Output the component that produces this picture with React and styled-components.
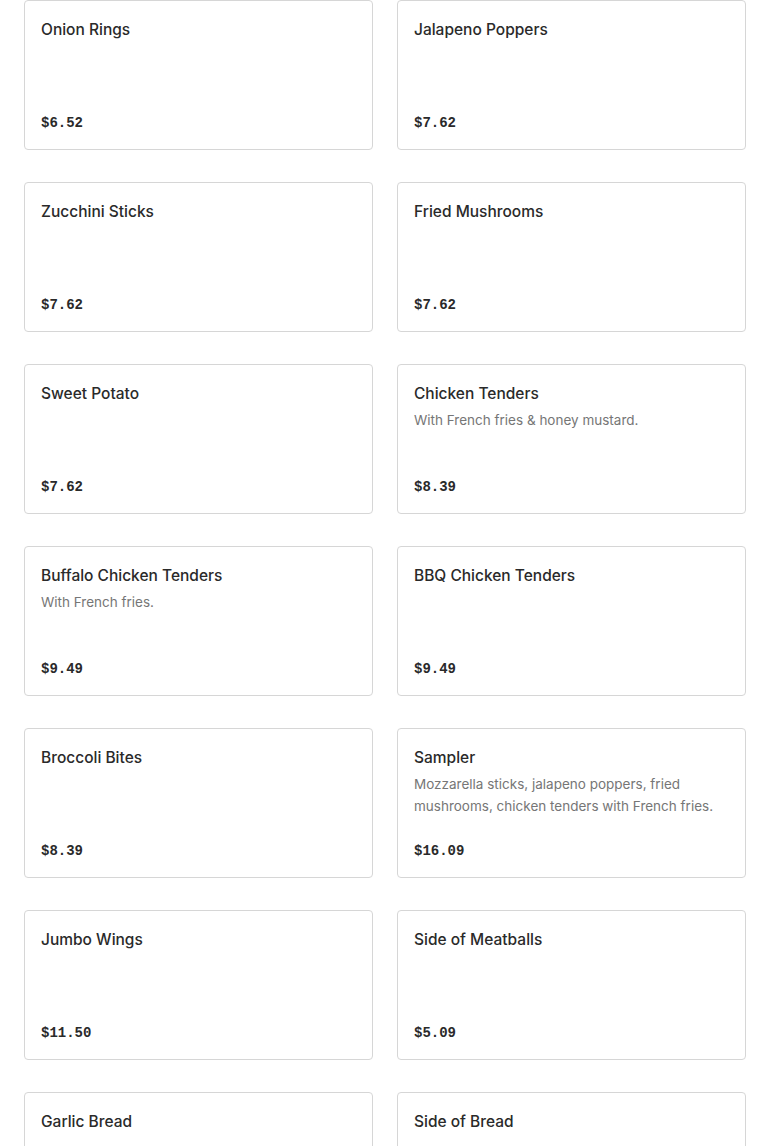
import React from "react";
import styled, { createGlobalStyle } from "styled-components";

const items = [
  { name: "Onion Rings", price: "$6.52" },
  { name: "Jalapeno Poppers", price: "$7.62" },
  { name: "Zucchini Sticks", price: "$7.62" },
  { name: "Fried Mushrooms", price: "$7.62" },
  { name: "Sweet Potato", price: "$7.62" },
  { name: "Chicken Tenders", desc: "With French fries & honey mustard.", price: "$8.39" },
  { name: "Buffalo Chicken Tenders", desc: "With French fries.", price: "$9.49" },
  { name: "BBQ Chicken Tenders", price: "$9.49" },
  { name: "Broccoli Bites", price: "$8.39" },
  {
    name: "Sampler",
    desc: "Mozzarella sticks, jalapeno poppers, fried mushrooms, chicken tenders with French fries.",
    price: "$16.09",
  },
  { name: "Jumbo Wings", price: "$11.50" },
  { name: "Side of Meatballs", price: "$5.09" },
  { name: "Garlic Bread" },
  { name: "Side of Bread" },
];

export default function App() {
  return (
    <>
      <GlobalStyle />
      <Menu>
        {items.map((item) => (
          <Card key={item.name}>
            <Title>{item.name}</Title>
            {item.desc && <Desc>{item.desc}</Desc>}
            {item.price && <Price>{item.price}</Price>}
          </Card>
        ))}
      </Menu>
    </>
  );
}

const GlobalStyle = createGlobalStyle`
  body {
    margin: 0;
    background: #fff;
    font-family: Inter, "Noto Sans", sans-serif;
    overflow: hidden;
  }
`;

const Menu = styled.div`
  display: grid;
  grid-template-columns: 1fr 1fr;
  column-gap: 24px;
  row-gap: 32px;
  padding: 0 24px 24px;
`;

const Card = styled.div`
  box-sizing: border-box;
  min-height: 150px;
  border: 1px solid #d6d6d6;
  border-radius: 4px;
  padding: 16px;
  display: flex;
  flex-direction: column;
`;

const Title = styled.div`
  font-size: 15.5px;
  font-weight: 500;
  line-height: 26px;
  color: #2a2a2a;
`;

const Desc = styled.div`
  margin-top: 2px;
  font-size: 13.5px;
  line-height: 22px;
  color: #767676;
`;

const Price = styled.div`
  margin-top: auto;
  font-family: "Liberation Mono", monospace;
  font-weight: 700;
  font-size: 14px;
  line-height: 20px;
  color: #2a2a2a;
`;
